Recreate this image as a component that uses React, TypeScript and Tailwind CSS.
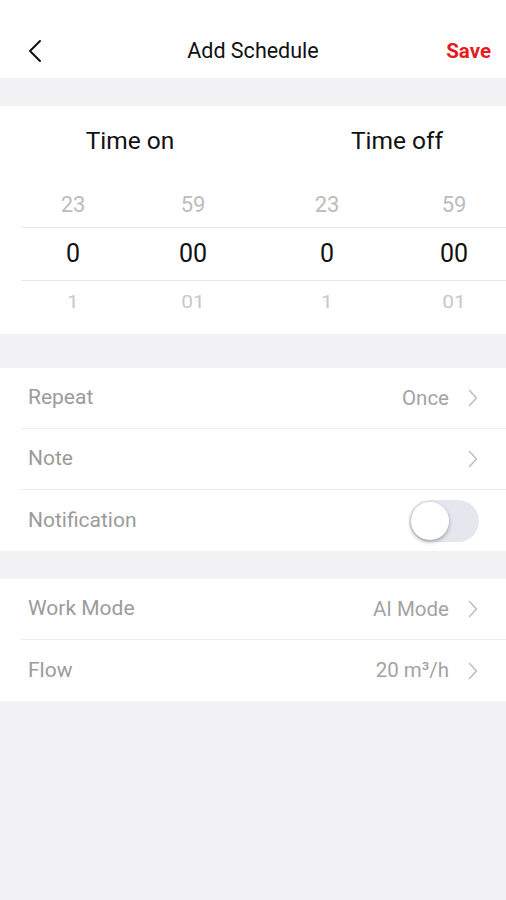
import React from "react";

const Chevron = () => (
  <svg width="10" height="18" viewBox="0 0 10 18" fill="none" className="shrink-0">
    <path d="M1.5 1.5 L8.5 9 L1.5 16.5" stroke="#bdbdbd" strokeWidth="1.5" strokeLinecap="round" strokeLinejoin="round" />
  </svg>
);

function Row({ label, value, last, children }: { label: string; value?: string; last?: boolean; children?: React.ReactNode }) {
  return (
    <div className="pl-[21px]">
      <div className={`flex h-[61px] items-center pl-[7px] pr-[28px] ${last ? "" : "border-b border-[#ececec]"}`}>
        <span className="text-[21px] text-[#9b9b9b]">{label}</span>
        <div className="ml-auto flex items-center gap-[19px]">
          {value && <span className="text-[20.5px] text-[#a3a3a3]">{value}</span>}
          {children ?? <Chevron />}
        </div>
      </div>
    </div>
  );
}

export default function App() {
  const widths = ["w-[146px]", "w-[94px]", "w-[174px]", "w-[80px]"];
  const top = ["23", "59", "23", "59"];
  const mid = ["0", "00", "0", "00"];
  const bot = ["1", "01", "1", "01"];
  return (
    <div className="min-h-[900px] bg-[#f2f2f5]" style={{ fontFamily: "Roboto, 'Noto Sans', sans-serif" }}>
      <div className="relative flex h-[78px] items-center bg-white pt-[24px]">
        <div className="pl-[28px]">
          <svg width="14" height="24" viewBox="0 0 14 24" fill="none">
            <path d="M12 2 L2 12 L12 22" stroke="#111" strokeWidth="2" strokeLinecap="round" strokeLinejoin="round" />
          </svg>
        </div>
        <div className="pointer-events-none absolute inset-x-0 top-[24px] bottom-0 flex items-center justify-center">
          <span className="text-[21.5px] text-[#111]">Add Schedule</span>
        </div>
        <span className="ml-auto pr-[15px] text-[20.5px] font-bold text-[#e31d1d]">Save</span>
      </div>

      <div className="mt-[28px] bg-white pb-[9px]">
        <div className="flex pt-[18px] text-[24.5px] leading-[34px] text-[#111]">
          <div className="w-[260px] text-center">Time on</div>
          <div className="ml-[37px] w-[200px] text-center">Time off</div>
        </div>
        <div className="mt-[23px] flex h-[46px] items-center text-[22px] text-[#bcbcbc]">
          {top.map((t, i) => (
            <div key={i} className={`${widths[i]} text-center`}>{t}</div>
          ))}
        </div>
        <div className="ml-[21px] border-y border-[#e8e8e8]">
          <div className="-ml-[21px] flex h-[52px] items-center text-[25px] text-[#111]">
            {mid.map((t, i) => (
              <div key={i} className={`${widths[i]} text-center`}>{t}</div>
            ))}
          </div>
        </div>
        <div className="flex h-[44px] items-center text-[21px] text-[#c8c8c8]">
          {bot.map((t, i) => (
            <div key={i} className={`${widths[i]} scale-y-90 text-center`}>{t}</div>
          ))}
        </div>
      </div>

      <div className="mt-[34px] bg-white">
        <Row label="Repeat" value="Once" />
        <Row label="Note" />
        <Row label="Notification" last>
          <div className="relative mr-[-1px] h-[42px] w-[70px] rounded-full bg-[#e4e7ed]">
            <div className="absolute left-[2px] top-[2px] h-[38px] w-[38px] rounded-full bg-white shadow-[0_2px_4px_rgba(0,0,0,0.3)]" />
          </div>
        </Row>
      </div>

      <div className="mt-[28px] bg-white">
        <Row label="Work Mode" value="AI Mode" />
        <Row label="Flow" value="20 m³/h" last />
      </div>
    </div>
  );
}
